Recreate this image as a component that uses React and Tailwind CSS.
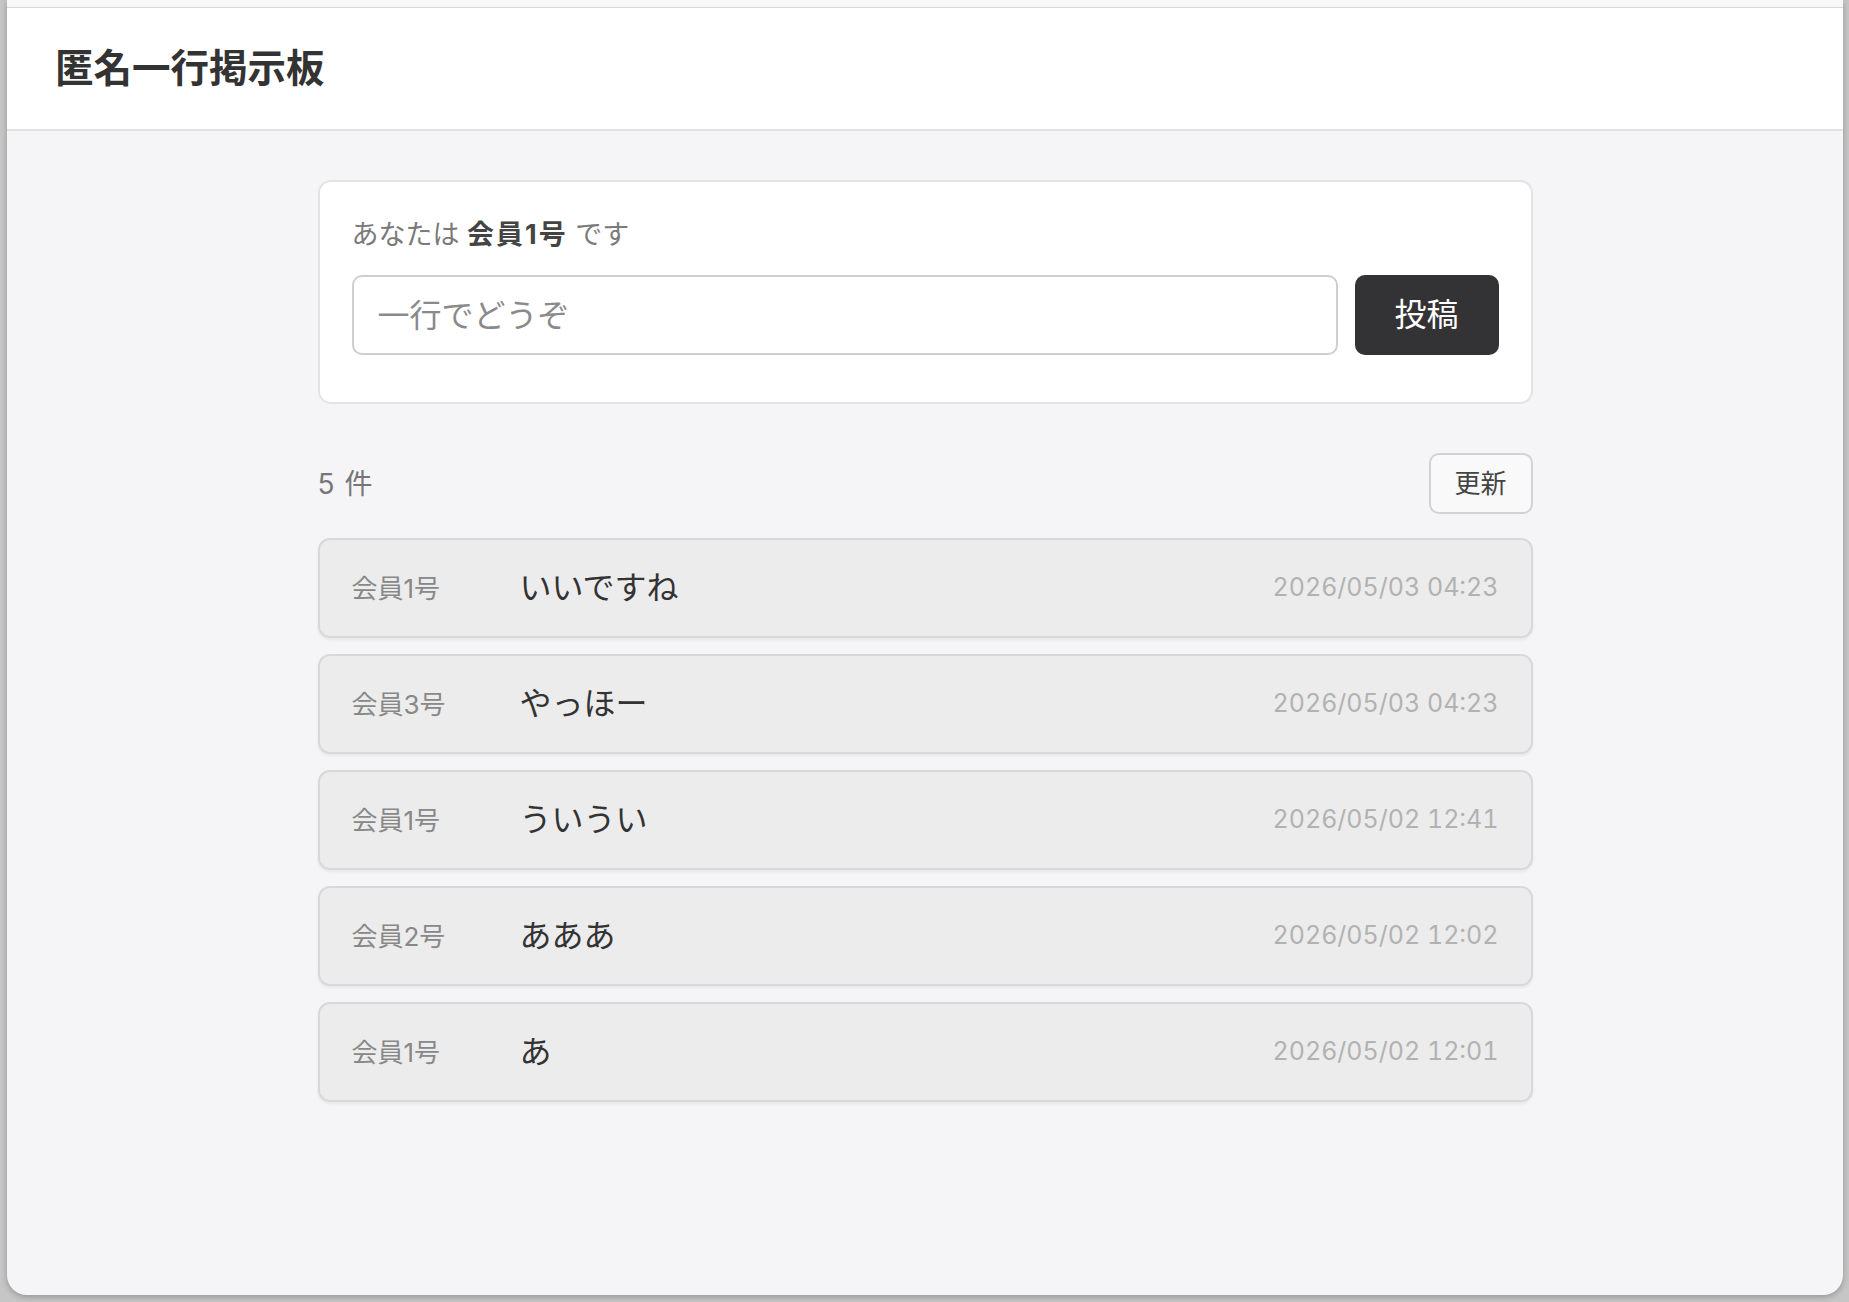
import React, { useState } from 'react';

const posts = [
  { author: '会員1号', body: 'いいですね', at: '2026/05/03 04:23' },
  { author: '会員3号', body: 'やっほー', at: '2026/05/03 04:23' },
  { author: '会員1号', body: 'ういうい', at: '2026/05/02 12:41' },
  { author: '会員2号', body: 'あああ', at: '2026/05/02 12:02' },
  { author: '会員1号', body: 'あ', at: '2026/05/02 12:01' },
];

const App = () => {
  const [text, setText] = useState('');

  return (
    <div className="w-[1849px] h-[1302px] bg-[#c6c6c6] flex pl-[7px] pr-[6px] pb-[7px] font-['Inter','Noto_Sans_CJK_JP',sans-serif]">
      <div className="flex-1 flex flex-col bg-[#f5f5f7] rounded-b-[20px] overflow-hidden shadow-[0_2px_6px_rgba(0,0,0,0.25)]">
        <div className="h-[8px] shrink-0 bg-[#f8f8f8] border-b border-[#d9d9d9]"></div>

        {/* Header */}
        <header className="h-[123px] shrink-0 bg-white border-b-2 border-[#e1e1e3] flex items-center pl-[48px]">
          <h1 className="text-[38.5px] font-bold text-[#333] leading-none">匿名一行掲示板</h1>
        </header>

        <main className="pt-[49px]">
          <div className="w-[1215px] mx-auto">
            {/* Post form */}
            <div className="bg-white border-2 border-[#e3e3e5] rounded-[13px] px-[32px] pt-[32px] pb-[47px]">
              <p className="text-[27px] leading-[42px] text-[#7a7a7a] mb-[19px]">
                あなたは <span className="font-bold text-[#444] tracking-[2px]">会員1号</span> です
              </p>
              <div className="flex gap-[17px]">
                <input
                  type="text"
                  value={text}
                  onChange={(e) => setText(e.target.value)}
                  placeholder="一行でどうぞ"
                  className="flex-1 h-[80px] border-2 border-[#cfcfcf] rounded-[10px] px-[24px] text-[32px] text-[#333] placeholder:text-[#8a8a8a] outline-none bg-white"
                />
                <button className="w-[144px] h-[80px] rounded-[10px] bg-[#333335] text-white text-[32px]">
                  投稿
                </button>
              </div>
            </div>

            {/* Count + refresh */}
            <div className="mt-[49px] flex items-center justify-between">
              <span className="text-[28px] text-[#777]">
                {posts.length}<span className="ml-[10px]">件</span>
              </span>
              <button className="w-[104px] h-[61px] border-2 border-[#d2d2d2] rounded-[10px] bg-[#f9f9fa] text-[26px] text-[#444]">
                更新
              </button>
            </div>

            {/* Posts */}
            <ul className="mt-[24px] flex flex-col gap-[16px]">
              {posts.map((p, i) => (
                <li
                  key={i}
                  className="h-[100px] flex items-center px-[32px] bg-[#ececec] border-2 border-[#d8d8d8] rounded-[12px] shadow-[0_2px_3px_rgba(0,0,0,0.06)]"
                >
                  <span className="w-[168px] shrink-0 text-[26px] text-[#888]">{p.author}</span>
                  <span className="flex-1 text-[32px] text-[#333]">{p.body}</span>
                  <span className="text-[25px] text-[#b2b2b2] tabular-nums">{p.at}</span>
                </li>
              ))}
            </ul>
          </div>
        </main>
      </div>
    </div>
  );
};

export default App;
